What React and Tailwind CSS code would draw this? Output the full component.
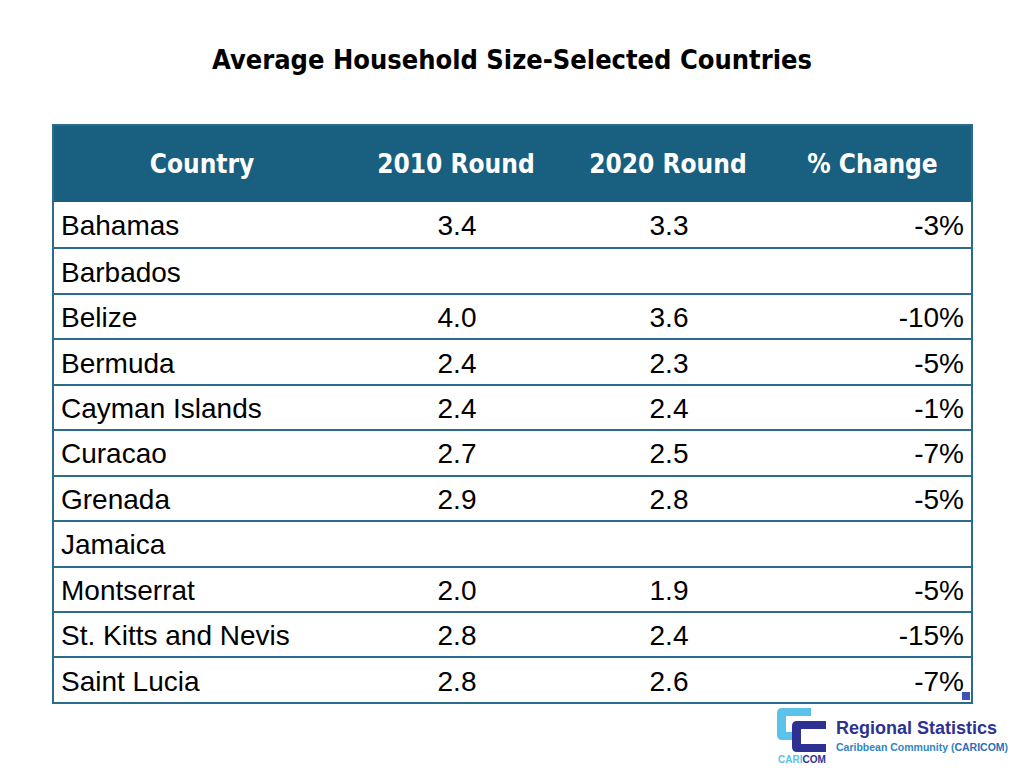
import React from 'react'

const rows = [
  ['Bahamas', '3.4', '3.3', '-3%'],
  ['Barbados', '', '', ''],
  ['Belize', '4.0', '3.6', '-10%'],
  ['Bermuda', '2.4', '2.3', '-5%'],
  ['Cayman Islands', '2.4', '2.4', '-1%'],
  ['Curacao', '2.7', '2.5', '-7%'],
  ['Grenada', '2.9', '2.8', '-5%'],
  ['Jamaica', '', '', ''],
  ['Montserrat', '2.0', '1.9', '-5%'],
  ['St. Kitts and Nevis', '2.8', '2.4', '-15%'],
  ['Saint Lucia', '2.8', '2.6', '-7%'],
]

const narrow = "font-['DejaVu_Sans',sans-serif] font-stretch-condensed"

function Logo() {
  return (
    <div className='flex items-start gap-[8px]'>
      <div className='flex flex-col items-center w-[54px]'>
        <svg width='54' height='48' viewBox='0 0 54 48'>
          <path d='M37 3 H8 Q3 3 3 8 V30 Q3 35 8 35 H20 V27 H12 V11 H37 Z' fill='#5bc2ec' />
          <path d='M52 16 H23 Q18 16 18 21 V42 Q18 47 23 47 H52 V39 H27 V24 H52 Z' fill='#2e3192' />
        </svg>
        <div className="font-['Liberation_Sans',Arial,sans-serif] text-[10px] font-bold leading-none mt-[2px] ml-[2px]">
          <span className='text-[#5bc2ec]'>CARI</span><span className='text-[#2e3192]'>COM</span>
        </div>
      </div>
      <div className="pt-[14px] font-['Liberation_Sans',Arial,sans-serif]">
        <div className='text-[18px] font-bold leading-none text-[#2e3192]'>Regional Statistics</div>
        <div className='mt-[5px] text-[10.5px] font-bold leading-none text-[#2e86c1]'>
          Caribbean Community (<span className='font-extrabold text-[#2a6fb8]'>CARICOM</span>)
        </div>
      </div>
    </div>
  )
}

export default function App() {
  return (
    <div className='w-[1024px] h-[768px] bg-white relative overflow-hidden'>
      <h1 className={`${narrow} pt-[42px] text-center text-[27px] font-bold text-black leading-[36px]`}>
        Average Household Size-Selected Countries
      </h1>
      <div className='mt-[46px] ml-[52px] w-[921px] border-2 border-[#2b6c8c]'>
        <div className={`${narrow} grid grid-cols-[296px_212px_212px_197px] h-[76px] bg-[#185f80] text-white text-[26px] font-bold items-center`}>
          <div className='text-center'>Country</div>
          <div className='text-center'>2010 Round</div>
          <div className='text-center'>2020 Round</div>
          <div className='text-center'>% Change</div>
        </div>
        {rows.map((r, i) => (
          <div
            key={r[0]}
            className={`relative grid grid-cols-[296px_212px_212px_197px] h-[45.45px] items-center pt-[3px] font-['Liberation_Sans',Arial,sans-serif] text-[28px] leading-none text-black ${i > 0 ? 'border-t-2 border-[#2b6c8c]' : ''}`}
          >
            <div className='pl-[7px]'>{r[0]}</div>
            <div className='text-center pl-[2px]'>{r[1]}</div>
            <div className='text-center pl-[2px]'>{r[2]}</div>
            <div className='text-right pr-[7px]'>{r[3]}</div>
            {i === rows.length - 1 && <span className='absolute right-[1px] bottom-[2px] w-[8px] h-[8px] bg-[#3f51b5]' />}
          </div>
        ))}
      </div>
      <div className='absolute left-[774px] top-[705px]'>
        <Logo />
      </div>
    </div>
  )
}
